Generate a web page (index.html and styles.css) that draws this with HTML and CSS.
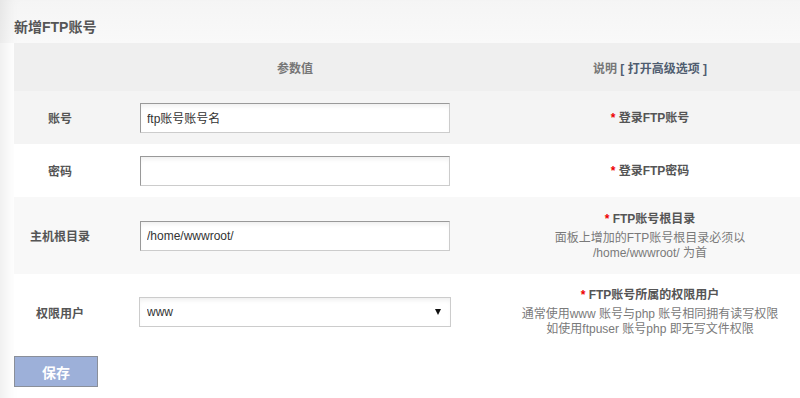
FILE: index.html
```html
<!DOCTYPE html>
<html lang="zh-CN">
<head>
  <meta charset="UTF-8" />
  <meta name="viewport" content="width=device-width, initial-scale=1.0"/>
  <title>新增FTP账号</title>
  <link rel="stylesheet" href="styles.css">
</head>
<body>
  <div class="page">
    <h1 class="title">新增FTP账号</h1>
    <form class="ftp-form" autocomplete="off">
      <table class="param-table">
        <colgroup>
          <col class="col-label">
          <col class="col-value">
          <col class="col-desc">
        </colgroup>
        <thead>
          <tr>
            <th></th>
            <th>参数值</th>
            <th>说明 <a class="adv-link" href="#">[ 打开高级选项 ]</a></th>
          </tr>
        </thead>
        <tbody>
          <tr class="row-a">
            <td class="label">账号</td>
            <td><input class="field" type="text" value="ftp账号账号名"></td>
            <td class="desc"><span class="req">*</span> 登录FTP账号</td>
          </tr>
          <tr class="row-b">
            <td class="label">密码</td>
            <td><input class="field" type="password" value=""></td>
            <td class="desc"><span class="req">*</span> 登录FTP密码</td>
          </tr>
          <tr class="row-c">
            <td class="label">主机根目录</td>
            <td><input class="field" type="text" value="/home/wwwroot/"></td>
            <td class="desc">
              <div><span class="req">*</span> FTP账号根目录</div>
              <div class="hint">面板上增加的FTP账号根目录必须以<br>/home/wwwroot/ 为首</div>
            </td>
          </tr>
          <tr class="row-d">
            <td class="label">权限用户</td>
            <td>
              <span class="select-wrap">
                <select class="field select">
                  <option>www</option>
                  <option>ftpuser</option>
                </select>
              </span>
            </td>
            <td class="desc">
              <div><span class="req">*</span> FTP账号所属的权限用户</div>
              <div class="hint">通常使用www 账号与php 账号相同拥有读写权限<br>如使用ftpuser 账号php 即无写文件权限</div>
            </td>
          </tr>
        </tbody>
      </table>
      <button type="submit" class="btn-save">保存</button>
    </form>
  </div>
</body>
</html>
```

FILE: styles.css
```css
html, body {
  margin: 0;
  overflow: hidden;
}
body {
  font-family: "Liberation Sans", "Noto Sans CJK SC", sans-serif;
  font-size: 12px;
  color: #555;
  background: #fff;
}
.page {
  padding: 0 0 20px 14px;
  min-height: 398px;
  box-sizing: border-box;
  background: linear-gradient(to bottom, #f5f5f5 0, #f9f9f9 43px, #fff 43px);
  box-shadow: inset 16px 0 14px -10px rgba(0,0,0,0.07);
}
.title {
  margin: 0;
  height: 43px;
  line-height: 54px;
  font-size: 14px;
  font-weight: bold;
  color: #555;
}
.ftp-form {
  margin: 0;
}
.param-table {
  width: 802px;
  table-layout: fixed;
  border-collapse: collapse;
}
.col-label { width: 92px; }
.col-value { width: 378px; }
.col-desc { width: 332px; }
.param-table th,
.param-table td {
  padding: 0;
  text-align: center;
  vertical-align: middle;
}
.param-table thead tr {
  height: 48px;
  background: #efefef;
}
.param-table th {
  font-weight: bold;
  color: #777;
}
.adv-link {
  color: #4f5d70;
  text-decoration: none;
}
.row-a { height: 53px; background: #f4f4f4; }
.row-b { height: 53px; background: #fff; }
.row-c { height: 77px; background: #f8f8f8; }
.row-d { height: 76px; background: #fff; }
.label {
  font-weight: bold;
  color: #555;
}
.field {
  display: block;
  margin: 0 auto;
  width: 310px;
  height: 30px;
  box-sizing: border-box;
  padding: 0 6px;
  border: 1px solid;
  border-color: #999 #ccc #ccc #999;
  background: #fff;
  box-shadow: inset 0 4px 5px -2px rgba(0,0,0,0.07);
  font-family: inherit;
  font-size: 12px;
  color: #333;
  outline: none;
}
.select-wrap {
  display: block;
  position: relative;
  width: 312px;
  margin: 0 auto;
}
.select {
  width: 312px;
  padding-left: 7px;
  border-color: #ccc;
  -webkit-appearance: none;
  appearance: none;
  border-radius: 0;
}
.select-wrap::after {
  content: "";
  position: absolute;
  right: 10px;
  top: 12px;
  border-left: 3px solid transparent;
  border-right: 3px solid transparent;
  border-top: 6px solid #111;
  pointer-events: none;
}
.desc {
  font-weight: bold;
  color: #555;
  line-height: 16px;
}
.desc .hint {
  margin-top: 4px;
  font-weight: normal;
  color: #7a7a7a;
  line-height: 15px;
}
.req {
  color: #e00;
}
.btn-save {
  display: block;
  margin-top: 6px;
  width: 84px;
  height: 31px;
  border: 1px solid #8a8f99;
  background: #9db0d9;
  color: #fff;
  font-family: inherit;
  font-size: 14px;
  font-weight: bold;
  cursor: pointer;
}
```
